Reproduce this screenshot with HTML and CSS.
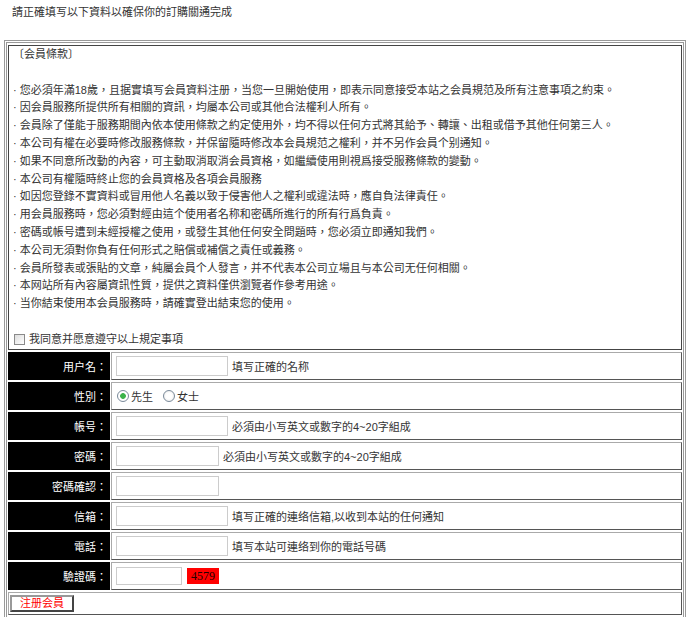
FILE: index.html
```html
<!DOCTYPE html>
<html lang="zh-Hant">
<head>
  <meta charset="UTF-8" />
  <title>会員注册</title>
  <link rel="stylesheet" href="styles.css">
</head>
<body>

  <p class="notice">請正確填写以下資料以確保你的訂購關通完成</p>

  <form>
  <table class="reg-table">
    <tr>
      <td colspan="2" class="terms">
        <div>〔会員條款〕</div>
        <div>&nbsp;</div>
        <div>· 您必須年滿18歲，且据實填写会員資料注册，当您一旦開始使用，即表示同意接受本站之会員規范及所有注意事項之約束。</div>
        <div>· 因会員服務所提供所有相關的資訊，均屬本公司或其他合法權利人所有。</div>
        <div>· 会員除了僅能于服務期間內依本使用條款之約定使用外，均不得以任何方式將其給予、轉讓、出租或借予其他任何第三人。</div>
        <div>· 本公司有權在必要時修改服務條款，并保留隨時修改本会員規范之權利，并不另作会員个别通知。</div>
        <div>· 如果不同意所改動的內容，可主動取消取消会員資格，如繼續使用則視爲接受服務條款的變動。</div>
        <div>· 本公司有權隨時終止您的会員資格及各項会員服務</div>
        <div>· 如因您登錄不實資料或冒用他人名義以致于侵害他人之權利或違法時，應自負法律責任。</div>
        <div>· 用会員服務時，您必須對經由這个使用者名称和密碼所進行的所有行爲負責。</div>
        <div>· 密碼或帳号遭到未經授權之使用，或發生其他任何安全問題時，您必須立即通知我們。</div>
        <div>· 本公司无須對你負有任何形式之賠償或補償之責任或義務。</div>
        <div>· 会員所發表或張貼的文章，純屬会員个人發言，并不代表本公司立場且与本公司无任何相關。</div>
        <div>· 本网站所有內容屬資訊性質，提供之資料僅供瀏覽者作參考用途。</div>
        <div>· 当你結束使用本会員服務時，請確實登出結束您的使用。</div>
        <div>&nbsp;</div>
        <label class="agree"><input type="checkbox" class="check">我同意并愿意遵守以上規定事項</label>
      </td>
    </tr>
    <tr>
      <td class="label">用户名：</td>
      <td class="field"><input type="text" class="box"><span class="hint">填写正確的名称</span></td>
    </tr>
    <tr>
      <td class="label">性別：</td>
      <td class="field radios">
        <label><input type="radio" name="sex" class="radio" checked>先生</label>
        <label><input type="radio" name="sex" class="radio">女士</label>
      </td>
    </tr>
    <tr>
      <td class="label">帳号：</td>
      <td class="field"><input type="text" class="box"><span class="hint">必須由小写英文或數字的4~20字組成</span></td>
    </tr>
    <tr>
      <td class="label">密碼：</td>
      <td class="field"><input type="password" class="box short"><span class="hint">必須由小写英文或數字的4~20字組成</span></td>
    </tr>
    <tr>
      <td class="label">密碼確認：</td>
      <td class="field"><input type="password" class="box short"></td>
    </tr>
    <tr>
      <td class="label">信箱：</td>
      <td class="field"><input type="text" class="box"><span class="hint">填写正確的連络信箱,以收到本站的任何通知</span></td>
    </tr>
    <tr>
      <td class="label">電話：</td>
      <td class="field"><input type="text" class="box"><span class="hint">填写本站可連络到你的電話号碼</span></td>
    </tr>
    <tr>
      <td class="label">驗證碼：</td>
      <td class="field"><input type="text" class="box code"><span class="captcha">4579</span></td>
    </tr>
    <tr>
      <td colspan="2" class="submit-row"><button type="button" class="submit-btn">注册会員</button></td>
    </tr>
  </table>
  </form>

</body>
</html>
```

FILE: styles.css
```css
body {
  margin: 0;
  padding: 0 1px 0 4px;
  font-family: 'Liberation Sans', 'Noto Sans CJK TC', sans-serif;
  font-size: 11px;
  color: #333;
  background: #fff;
}

.notice {
  margin: 0;
  padding: 3px 0 0 8px;
  line-height: 18px;
  height: 18px;
}

.reg-table {
  width: 682px;
  margin-top: 19px;
  border: 3px double #999;
  border-spacing: 1px 2px;
}

.reg-table td {
  border: 1px solid;
  border-color: #aaa #555 #555 #aaa;
}

.terms {
  padding: 0 4px;
  line-height: 17.8px;
  border-color: #444 !important;
}

.agree {
  display: flex;
  align-items: center;
}

.check {
  appearance: none;
  width: 11px;
  height: 11px;
  margin: 0 4px 0 1px;
  border: 1px solid #8a8a8a;
  background: linear-gradient(135deg, #ddd, #fff);
}

.label {
  width: 98px;
  background: #000;
  color: #fff;
  text-align: right;
  padding: 0 2px 0 0;
  border-color: #000 !important;
}

.field {
  padding: 3px 4px;
  height: 20px;
}

.box {
  width: 112px;
  height: 20px;
  box-sizing: border-box;
  border: 1px solid #ccc;
  padding: 0;
  margin: 0;
  vertical-align: middle;
}

.box.short {
  width: 103px;
}

.box.code {
  width: 66px;
  height: 18px;
}

.hint {
  margin-left: 4px;
  vertical-align: middle;
}

.radios label {
  display: inline-flex;
  align-items: center;
  margin-right: 6px;
  vertical-align: middle;
}

.radio {
  appearance: none;
  width: 12px;
  height: 12px;
  margin: 0 2px 0 1px;
  border: 1px solid #7a8a9a;
  border-radius: 50%;
  background: radial-gradient(circle, #fff 40%, #e4e4e4);
}

.radio:checked {
  background: radial-gradient(circle, #3cb34a 0, #3cb34a 2.5px, #fff 3.2px);
}

.captcha {
  display: inline-block;
  margin-left: 5px;
  width: 32px;
  height: 16px;
  line-height: 16px;
  background: #f00;
  color: #200;
  font-family: 'Liberation Serif', serif;
  font-size: 12px;
  text-align: center;
  vertical-align: middle;
}

.submit-row {
  padding: 2px 1px;
}

.submit-btn {
  width: 64px;
  height: 17px;
  padding: 0;
  background: #fff;
  color: #f00;
  border: 2px solid;
  border-color: #999 #444 #444 #999;
  font-family: 'Liberation Sans', 'Noto Sans CJK TC', sans-serif;
  font-size: 11px;
  line-height: 13px;
  cursor: pointer;
}
```
